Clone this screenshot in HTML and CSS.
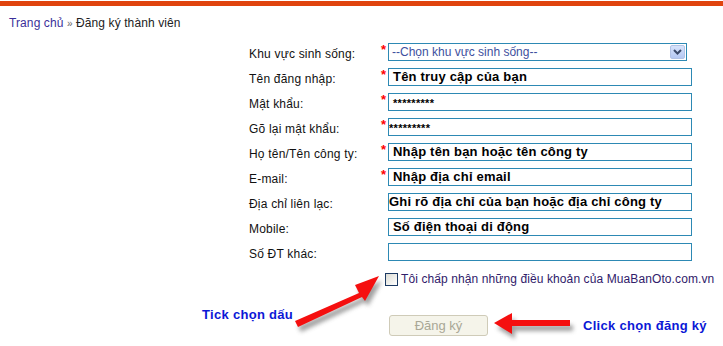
FILE: index.html
```html
<!DOCTYPE html>
<html lang="vi">
  <head>
    <meta charset="UTF-8" />
    <title>Đăng ký thành viên</title>
    <link rel="stylesheet" href="styles.css">
  </head>
  <body>
    <div class="topbar"></div>
    <div class="breadcrumb">
      <a href="#">Trang chủ</a> <span class="sep">»</span> Đăng ký thành viên
    </div>

    <div class="page">
      <form class="register">
        <label>Khu vực sinh sống:</label>
        <span class="req">*</span>
        <div class="select">
          <span>--Chọn khu vực sinh sống--</span>
          <span class="drop">
            <svg width="9" height="6" viewBox="0 0 9 6"><path d="M1 1 L4.5 4.5 L8 1" fill="none" stroke="#3b4a6b" stroke-width="2"/></svg>
          </span>
        </div>

        <label>Tên đăng nhập:</label>
        <span class="req">*</span>
        <div class="field bold">Tên truy cập của bạn</div>

        <label>Mật khẩu:</label>
        <span class="req">*</span>
        <div class="field pass">*********</div>

        <label>Gõ lại mật khẩu:</label>
        <span class="req">*</span>
        <div class="field pass tight">*********</div>

        <label>Họ tên/Tên công ty:</label>
        <span class="req">*</span>
        <div class="field bold">Nhập tên bạn hoặc tên công ty</div>

        <label>E-mail:</label>
        <span class="req">*</span>
        <div class="field bold">Nhập địa chỉ email</div>

        <label>Địa chỉ liên lạc:</label>
        <span class="req"></span>
        <div class="field bold tight">Ghi rõ địa chỉ của bạn hoặc địa chỉ công ty</div>

        <label>Mobile:</label>
        <span class="req"></span>
        <div class="field bold">Số điện thoại di động</div>

        <label>Số ĐT khác:</label>
        <span class="req"></span>
        <div class="field"></div>
      </form>

      <div class="agree">
        <span class="box"></span>
        <span>Tôi chấp nhận những điều khoản của MuaBanOto.com.vn</span>
      </div>

      <div class="submit-row">
        <button class="submit" disabled>Đăng ký</button>
      </div>

      <span class="note note-tick">Tick chọn dấu</span>
      <span class="note note-click">Click chọn đăng ký</span>

      <svg class="arrow arrow-tick" width="110" height="70" viewBox="0 0 110 70">
        <defs>
          <filter id="blur1" x="-20%" y="-20%" width="140%" height="140%"><feGaussianBlur stdDeviation="2"/></filter>
        </defs>
        <g transform="translate(3,5)" fill="#8a8a8a" filter="url(#blur1)" opacity="0.8">
          <path d="M6 50 L70 22 L66 14 L90 5 L76 30 L73 26 L9 56 Z"/>
        </g>
        <path d="M6 50 L70 22 L66 14 L90 5 L76 30 L73 26 L9 56 Z" fill="#f50f0f"/>
      </svg>

      <svg class="arrow arrow-click" width="90" height="34" viewBox="0 0 90 34">
        <defs>
          <filter id="blur2" x="-20%" y="-20%" width="140%" height="140%"><feGaussianBlur stdDeviation="2"/></filter>
        </defs>
        <g transform="translate(3,5)" fill="#8a8a8a" filter="url(#blur2)" opacity="0.8">
          <path d="M4 14 L22 4 L22 11 L80 11 L80 17 L22 17 L22 25 Z"/>
        </g>
        <path d="M4 14 L22 4 L22 11 L80 11 L80 17 L22 17 L22 25 Z" fill="#f50f0f"/>
      </svg>
    </div>
  </body>
</html>
```

FILE: styles.css
```css
* {
  box-sizing: border-box;
}

body {
  margin: 0;
  background: #fff;
  font-family: "Liberation Sans", Arial, sans-serif;
  font-size: 12px;
  color: #111;
}

.topbar {
  margin-top: 1px;
  height: 5px;
  background: #e0440e;
}

.breadcrumb {
  padding: 10px 0 0 9px;
  height: 37px;
  color: #222;
  letter-spacing: 0.1px;
}

.breadcrumb a {
  color: #3b2f9a;
  text-decoration: none;
}

.breadcrumb .sep {
  color: #666;
  font-size: 10px;
}

.page {
  position: relative;
  height: 303px;
}

.register {
  display: grid;
  grid-template-columns: 132px 7px 304px;
  row-gap: 7px;
  align-items: center;
  padding-left: 249px;
}

.register label {
  color: #111;
  padding-top: 3px;
  letter-spacing: 0.2px;
}

.req {
  color: #f00;
  font-size: 13px;
  font-weight: bold;
  align-self: start;
  margin-top: -1px;
}

.select {
  display: flex;
  align-items: center;
  justify-content: space-between;
  width: 299px;
  height: 18px;
  border: 1px solid #2d89b4;
  padding: 0 1px 0 3px;
  color: #3e4f9e;
}

.drop {
  display: flex;
  align-items: center;
  justify-content: center;
  width: 15px;
  height: 14px;
  background: linear-gradient(#d7e3fb, #b5c8f3);
  border: 1px solid #b3c3e6;
  border-radius: 2px;
}

.field {
  height: 18px;
  border: 1px solid #2d89b4;
  padding: 0 0 0 4px;
  line-height: 15px;
  color: #000;
  white-space: nowrap;
  overflow: hidden;
}

.field.bold {
  font-weight: bold;
  font-size: 13px;
  letter-spacing: 0.2px;
}

.field.tight {
  padding-left: 0;
}

.field.pass {
  font-size: 11px;
  font-weight: bold;
  line-height: 18px;
  letter-spacing: 0.3px;
}

.agree {
  display: flex;
  align-items: center;
  gap: 3px;
  padding: 11px 0 0 385px;
  font-size: 12px;
  color: #30206a;
  letter-spacing: 0.1px;
}

.box {
  width: 13px;
  height: 13px;
  border: 1px solid #1c3a63;
  background: linear-gradient(135deg, #dcdcd4, #fff);
}

.submit-row {
  padding: 29px 0 0 389px;
}

.submit {
  width: 99px;
  height: 21px;
  border: 1px solid #cfcbb8;
  border-radius: 3px;
  background: #f5f4ea;
  color: #a9a796;
  font-family: "Liberation Sans", Arial, sans-serif;
  font-size: 13px;
  padding: 0;
}

.note {
  position: absolute;
  color: #0b18d6;
  font-weight: bold;
  font-size: 13px;
  letter-spacing: 0.3px;
}

.note-tick {
  left: 202px;
  top: 264px;
}

.note-click {
  left: 583px;
  top: 275px;
}

.arrow {
  position: absolute;
}

.arrow-tick {
  left: 289px;
  top: 228px;
}

.arrow-click {
  left: 490px;
  top: 266px;
}
```
